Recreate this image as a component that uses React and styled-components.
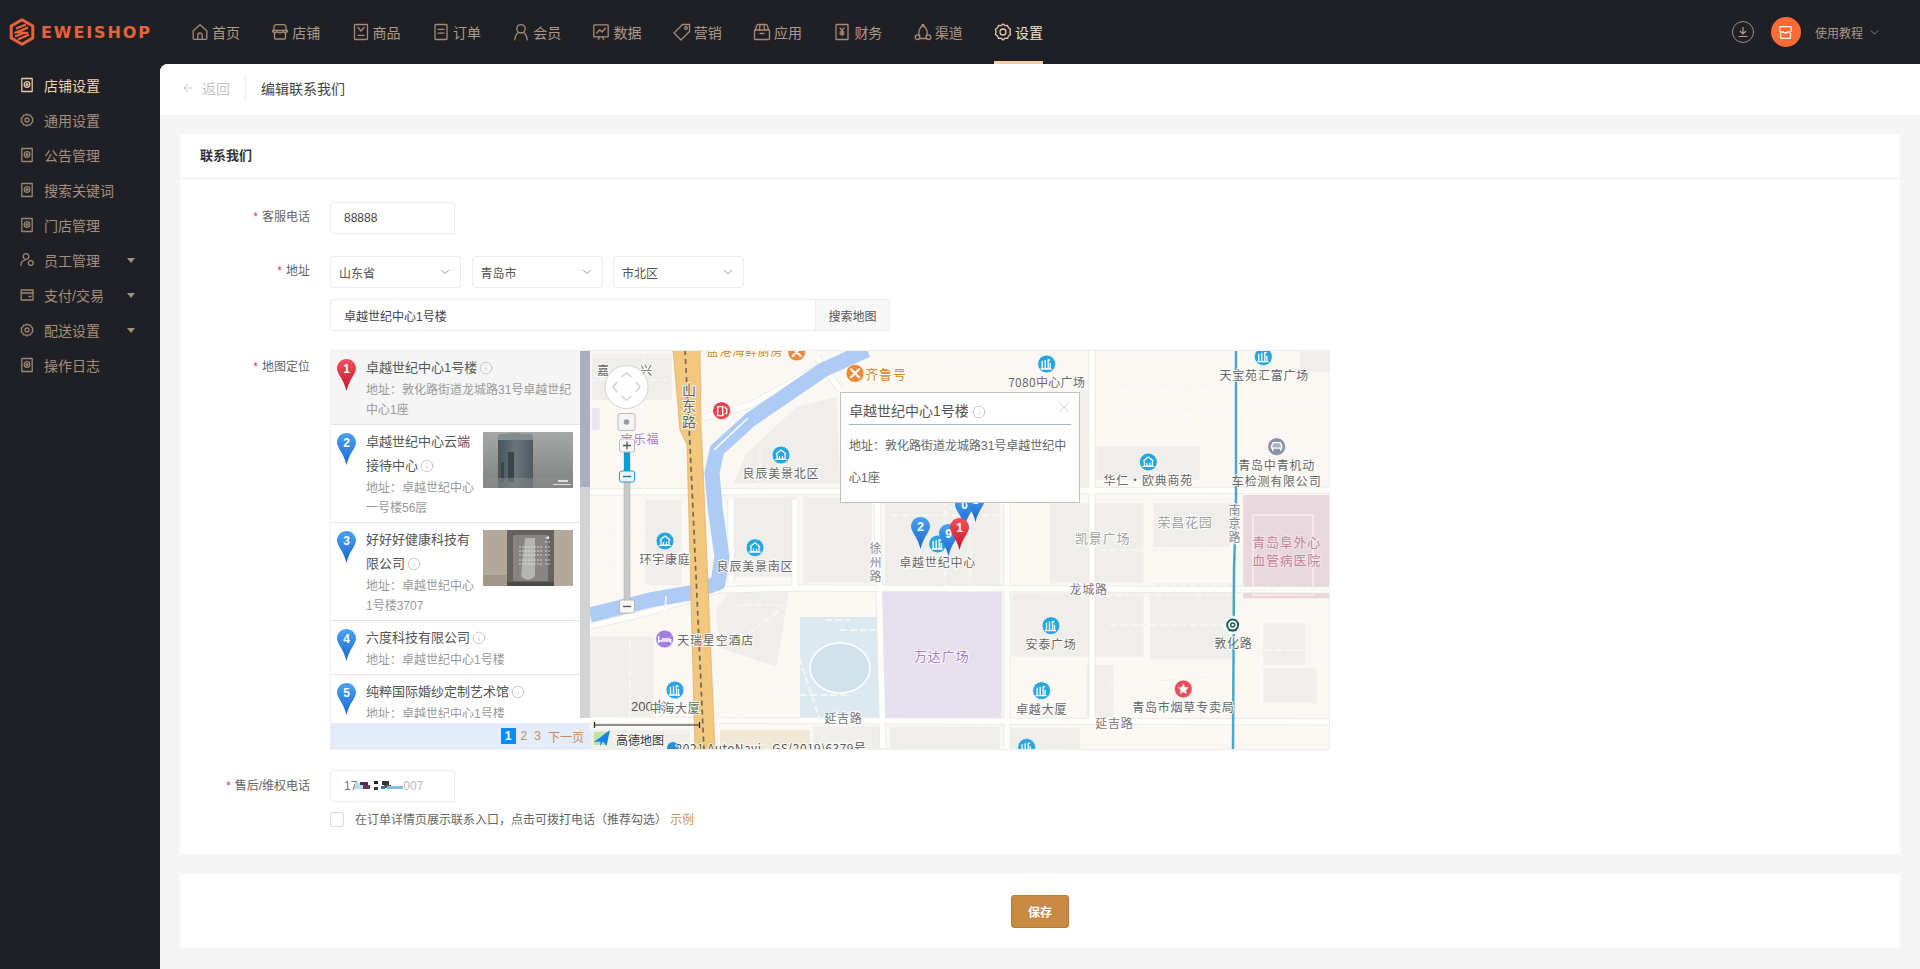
import React from "react";
import styled, { createGlobalStyle } from "styled-components";
import { ChevronDown, ArrowLeft, Info, X } from "lucide-react";

const ADDR = "\u5730\u5740\uFF1A";
const CHECK_TEXT = "在订单详情页展示联系入口\uFF0C点击可拨打电话\uFF08推荐勾选\uFF09";

const Global = createGlobalStyle`
  html, body { margin: 0; padding: 0; height: 100%; background: #f5f5f5; }
  body { font-family: "Liberation Sans", "Noto Sans CJK SC", sans-serif; font-size: 12px; color: #333; }
  * { box-sizing: border-box; }
`;

const Page = styled.div`width: 1920px; height: 969px; overflow: hidden; display: flex; flex-direction: column; background: #1f2026;`;
const Header = styled.header`height: 64px; flex: none; display: flex; align-items: center; background: #1f2026;`;
const Logo = styled.div`width: 191px; padding-left: 9px; display: flex; align-items: center; gap: 6px; flex: none;`;
const LogoText = styled.span`font-family: "DejaVu Sans", sans-serif; font-weight: 700; font-size: 16px; letter-spacing: 1.9px; color: #e9633a;`;
const Nav = styled.nav`display: flex; gap: 31.3px; height: 64px;`;
const NavItem = styled.a`
  position: relative; display: flex; align-items: center; gap: 3px; height: 64px; font-size: 14px;
  color: ${(p) => (p.$active ? "#f5e0c9" : "#b19a83")};
  svg { color: ${(p) => (p.$active ? "#e8c9a7" : "#a88c72")}; }
  ${(p) => p.$active && `&::after { content: ""; position: absolute; left: 0; right: 0; bottom: 0; height: 3px; background: #f4cfa8; }`}
`;
const HeaderRight = styled.div`margin-left: auto; display: flex; align-items: center; padding-right: 39px; color: #ab9684;`;
const Download = styled.span`width: 22px; height: 22px; border-radius: 50%; border: 1px solid #a58c74; display: flex; align-items: center; justify-content: center; margin-right: 17px;`;
const Avatar = styled.span`width: 30px; height: 30px; border-radius: 50%; background: #ff6a35; display: flex; align-items: center; justify-content: center; margin-right: 14px;`;
const Tutorial = styled.span`font-size: 12px; margin-right: 5px;`;

const Body = styled.div`flex: 1; display: flex; min-height: 0;`;
const Sidebar = styled.aside`width: 160px; flex: none; padding-top: 3px; background: #1f2026;`;
const SideItem = styled.a`
  height: 35px; display: flex; align-items: center; padding-left: 20px; gap: 10px; font-size: 14px; position: relative;
  color: ${(p) => (p.$active ? "#f2d3ae" : "#a58f7b")};
  svg { flex: none; }
`;
const Caret = styled.i`position: absolute; left: 127px; top: 16px; width: 0; height: 0; border: 4px solid transparent; border-top: 5px solid #a39180; border-bottom: 0;`;

const Main = styled.main`flex: 1; background: #f5f5f5; border-top-left-radius: 8px; overflow: hidden; display: flex; flex-direction: column;`;
const TopBar = styled.div`height: 51px; flex: none; background: #fff; display: flex; align-items: center; padding: 0 0 4px 21px; font-size: 14px;`;
const Back = styled.span`display: flex; align-items: center; gap: 7px; color: #c4c4c4; width: 65px; height: 24px; border-right: 1px solid #eee;`;
const PageTitle = styled.span`margin-left: 15px; color: #444;`;
const Content = styled.div`padding: 19px 20px 0; display: flex; flex-direction: column; gap: 20px;`;
const Card = styled.section`background: #fff; border-radius: 4px;`;
const CardHead = styled.div`height: 45px; padding: 0 0 4px 20px; display: flex; align-items: center; border-bottom: 1px solid #f0f0f0; font-size: 13px; font-weight: 700; color: #333;`;
const Form = styled.div`padding: 23px 0 27px; display: flex; flex-direction: column;`;
const Row = styled.div`display: flex; margin-bottom: ${(p) => p.$mb ?? 22}px;`;
const Label = styled.label`width: 130px; flex: none; text-align: right; line-height: ${(p) => p.$lh ?? 31}px; color: #666; margin-right: 20px; i { color: #d8405c; font-style: normal; margin-right: 4px; }`;
const Controls = styled.div`display: flex; flex-direction: column;`;
const Field = styled.div`
  width: ${(p) => p.$w ?? 125}px; height: 32px; border: 1px solid #eee; border-radius: 3px; padding: 0 13px; display: flex; align-items: center; color: #444; background: #fff;
`;
const SelectRow = styled.div`display: flex; gap: 10.5px; margin-bottom: 11px;`;
const Select = styled.div`width: 131px; height: 32px; border: 1px solid #eee; border-radius: 3px; padding: 0 8px; display: flex; align-items: center; justify-content: space-between; color: #555; svg { color: #777; }`;
const AddressGroup = styled.div`display: flex; width: 560px; height: 32px;`;
const SearchBtn = styled.div`width: 74px; flex: none; background: #f7f7f7; border: 1px solid #eee; border-left: 0; border-radius: 0 3px 3px 0; display: flex; align-items: center; justify-content: center; color: #555;`;
const AddressField = styled(Field)`flex: 1; width: auto; border-radius: 3px 0 0 3px;`;
const Mosaic = styled.svg`width: 52px; height: 12px; margin: 0 -4px 0 -2px;`;
const Digits = styled.span`color: #777; &:last-child { color: #bbb; }`;
const CheckRow = styled.div`display: flex; align-items: center; margin-top: 10px; height: 15px; color: #666;`;
const CheckText = styled.span`margin-top: -3px; display: inline-flex;`;
const Check = styled.span`width: 14px; height: 15px; border: 1px solid #ddd; border-radius: 2px; margin-right: 11px;`;
const Example = styled.a`color: #c59561; margin-left: 3px;`;

const MapBox = styled.div`position: relative; width: 1000px; height: 400px; border: 1px solid #eee; display: flex;`;
const ListCol = styled.div`width: 259px; flex: none; display: flex; flex-direction: column; background: #fff;`;
const ListTop = styled.div`flex: 1; min-height: 0; display: flex; margin-bottom: 5px;`;
const List = styled.div`width: 249px; overflow: hidden;`;
const Scrollbar = styled.div`width: 10px; background: #d3d3d3; div { height: 136px; background: #aaaec0; }`;
const Item = styled.div`
  display: flex; padding: 5px 7px 4px 6px; gap: 10px; border-bottom: 1px solid #e6e6e6;
  background: ${(p) => (p.$active ? "#f5f5f5" : "#fff")};
`;
const PinCell = styled.div`flex: none; width: 19px; padding-top: 3px;`;
const ItemText = styled.div`flex: 1; min-width: 0;`;
const ItemTitle = styled.div`font-size: 13px; line-height: 24px; color: #555; svg { vertical-align: -3px; margin-left: 2px; color: #b4b4b4; }`;
const ItemAddr = styled.div`font-size: 12px; line-height: 20px; color: #999;`;
const Thumb = styled.svg`width: 90px; height: 56px; flex: none; margin-top: 2px; margin-left: -2px;`;
const Pager = styled.div`height: 26px; flex: none; background: #e3ecf8; display: flex; align-items: center; justify-content: flex-end; gap: 7px; padding-right: 6px; color: #c28c5f; font-size: 12px;`;
const PageNum = styled.span`${(p) => p.$on && `width: 15px; height: 16px; margin-right: -2px; background: #0a8cf0; color: #fff; font-weight: 700; display: flex; align-items: center; justify-content: center;`}`;
const Canvas = styled.div`position: relative; width: 739px; height: 398px; overflow: hidden; background: #fbf8f3;`;
const MapSvg = styled.svg`display: block; width: 739px; height: 398px;`;
const MapLabel = styled.text`
  font-family: "Noto Sans CJK SC", sans-serif; font-size: ${(p) => p.$s ?? 12}px; letter-spacing: ${(p) => p.$ls ?? 0.8}px; text-anchor: middle;
  fill: ${(p) => p.$c ?? "#666"}; paint-order: stroke; stroke: ${(p) => p.$halo ?? "rgba(255,255,255,.85)"}; stroke-width: 2px; dominant-baseline: central;
`;
const Popup = styled.div`position: absolute; left: 250px; top: 41px; width: 240px; height: 111px; background: #fff; border: 1px solid #c1c1c1; padding: 0 8px;`;
const PopTitle = styled.div`height: 32px; padding-top: 5px; line-height: 26px; font-size: 14px; color: #555; border-bottom: 1px solid #a9b5cc; svg { vertical-align: -3px; margin-left: 3px; color: #b4b4b4; }`;
const PopClose = styled.span`position: absolute; right: 6px; top: 5px; color: #c4c4c4; display: flex;`;
const PopBody = styled.div`font-size: 12px; line-height: 32px; color: #666; padding-top: 5px; width: 222px; word-break: break-all;`;

const Footer = styled(Card)`height: 74px; display: flex; align-items: center; justify-content: center;`;
const Save = styled.button`width: 58px; height: 33px; background: #c88a42; border: 1px solid #b87b35; border-radius: 3px; color: #fff; font: 700 12px "Liberation Sans", "Noto Sans CJK SC", sans-serif;`;

/* ---------- icons ---------- */
const Ico = ({ children, s = 18, sw = 1.3 }) => (
  <svg width={s} height={s} viewBox="0 0 18 18" fill="none" stroke="currentColor" strokeWidth={sw} strokeLinecap="round" strokeLinejoin="round">{children}</svg>
);
const navIcons = {
  home: <><path d="M2.200 7.800 9 1.800l6.800 6v7.500a1 1 0 0 1-1 1H3.200a1 1 0 0 1-1-1z"/><path d="M6.800 16.300v-4.100a2.200 2.200 0 0 1 4.400 0v4.100"/></>,
  store: <><path d="M3 8V4a2.400 2.400 0 0 1 2.400-2.400h7.200A2.400 2.400 0 0 1 15 4v4"/><path d="M1.500 7.500c0 2.500 3.500 3 4.500 1 .8 1.800 5.200 1.800 6 0 1 2 4.500 1.500 4.500-1z"/><path d="M3.500 10v5a1 1 0 0 0 1 1h9a1 1 0 0 0 1-1v-5"/></>,
  goods: <><rect x="2.500" y="1.500" width="13" height="15" rx=".8"/><path d="M6 4.500 9 8l3-3.500"/><path d="M6 12.300h6"/></>,
  order: <><rect x="3" y="1.500" width="12" height="15" rx=".8"/><path d="M6 6.300h6M6 10.200h6"/></>,
  user: <><circle cx="9" cy="5.800" r="4.200"/><path d="M2.800 16.800c.2-3.700 1.800-6 3.700-7.400M15.200 16.800c-.2-3.700-1.800-6-3.700-7.400"/></>,
  data: <><rect x="1.800" y="1.800" width="14.400" height="12" rx=".6"/><path d="m4.700 10 3-3.200 2.500 2.200 3.200-3.700"/><path d="M6.500 16.500l.8-2.700M11.500 16.500l-.8-2.700"/></>,
  tag: <><path d="M9.500 1.500h7v7L8 17 1 10z"/><circle cx="13" cy="5" r="1.300"/></>,
  app: <><path d="M2.500 7 3.500 3a2 2 0 0 1 2-1.500h7A2 2 0 0 1 14.500 3l1 4"/><rect x="1.500" y="7" width="15" height="9.500" rx=".8"/><path d="M7 1.500 6.500 7M11 1.500l.5 5.500M7 10.500h4"/></>,
  finance: <><rect x="3" y="1.500" width="12" height="15" rx=".6"/><path d="m7 5 2 2.500L11 5M9 7.500v5M7 9h4M7 11h4"/></>,
  channel: <><path d="M5.800 13c-2-2.500-1-8.500 3.200-10.300 4.200 1.800 5.200 7.800 3.200 10.300"/><circle cx="9" cy="2.300" r="1"/><circle cx="3.500" cy="14.200" r="2.300"/><circle cx="14.500" cy="14.200" r="2.300"/><path d="M5.800 15.500h6.400"/></>,
  gear: <><path d="M9 1 11 2.600l2.500-.2 1 2.400 2 1.500-.6 2.700.6 2.500-2 1.500-1 2.400-2.500-.2L9 17l-2-1.800-2.500.2-1-2.400-2-1.500.6-2.500-.6-2.700 2-1.500 1-2.400L7 2.600z"/><circle cx="9" cy="9" r="3"/></>,
};
const Nv = ({ n }) => <Ico>{navIcons[n]}</Ico>;
const SideIcon = ({ kind, color }) => (
  <svg width="14" height="16" viewBox="0 0 14 16" fill="none" stroke={color} strokeWidth="1.300" strokeLinecap="round" strokeLinejoin="round">
    {kind === "doc" && <><rect x="1.800" y="1.500" width="10.400" height="13" /><circle cx="7" cy="7.500" r="2.800"/><circle cx="7" cy="7.500" r=".9"/></>}
    {kind === "gear" && <><path d="M7 2 8.500 3.200l2 0 .8 1.800 1.500 1.300L12.300 8l.5 1.700-1.500 1.300-.8 1.800-2 0L7 14l-1.500-1.200-2 0L2.700 11 1.200 9.700 1.700 8l-.5-1.700L2.700 5l.8-1.800 2 0z"/><circle cx="7" cy="8" r="2"/></>}
    {kind === "staff" && <><circle cx="6" cy="4.500" r="2.800"/><path d="M1 13.500c0-3 2-5 4-5.300"/><circle cx="10.800" cy="11" r="2.400"/></>}
    {kind === "pay" && <><rect x="1.200" y="3" width="11.800" height="10" /><path d="M1.200 6h11.800M9 9.500h2"/></>}
  </svg>
);
const Pin = ({ n, red, x, y, id }) => {
  const gid = `${id}g`;
  return (
    <svg x={x} y={y} width="19" height="32" viewBox="0 0 19 32">
      <defs>
        <linearGradient id={gid} x1="0" y1="0" x2="0" y2="1">
          <stop offset="0" stopColor={red ? "#f4505c" : "#4aa2f4"} />
          <stop offset="1" stopColor={red ? "#c5152a" : "#1b68cf"} />
        </linearGradient>
      </defs>
      <path d="M9.500 0C4.200 0 0 4.200 0 9.500 0 15 6.500 19.500 9.500 32 12.500 19.500 19 15 19 9.500 19 4.200 14.800 0 9.500 0Z" fill={`url(#${gid})`} />
      <text x="9.500" y="14" textAnchor="middle" fontSize="12" fontWeight="700" fill="#fff" fontFamily="Liberation Sans, sans-serif">{n}</text>
    </svg>
  );
};
const Poi = ({ x, y, kind = "tower", c = "#29a6df" }) => (
  <g transform={`translate(${x} ${y})`}>
    <circle r="9" fill={c} stroke="#fff" strokeOpacity=".7" />
    {kind === "tower" && <path d="M-4.500 5v-8M-1.500 5v-9M1.500 5v-9h2M-6 5h11M3.500 -1v6" stroke="#fff" strokeWidth="1.300" fill="none"/>}
    {kind === "home" && <path d="M-5 -1 0 -5 5 -1M-4 -1v5h8v-5M-1.500 4v-3M1.500 4v-3M-6 4.500h12" stroke="#fff" strokeWidth="1.200" fill="none"/>}
    {kind === "food" && <path d="M-4 -4 4 4M4 -4 -4 4" stroke="#fff" strokeWidth="2.200" strokeLinecap="round"/>}
    {kind === "hotel" && <path d="M-6 -3v7M6 0v4M-6 2h12M-3 0h8.500" stroke="#fff" strokeWidth="1.500" fill="none"/>}
    {kind === "gas" && <path d="M-4 5v-9h5v9M-5 5h7M3 -4l2 2v5h-2" stroke="#fff" strokeWidth="1.400" fill="none"/>}
    {kind === "star" && <path d="M0 -5.500 1.600 -1.800 5.500 -1.500 2.600 1.100 3.400 5 0 3 -3.400 5 -2.600 1.100 -5.500 -1.500 -1.600 -1.800Z" fill="#fff"/>}
    {kind === "car" && <path d="M-5 1.500h10V-1L3.500 -4h-7L-5 -1ZM-4 1.500v2.500M4 1.500v2.500" stroke="#fff" strokeWidth="1.400" fill="#fff" fillOpacity=".3"/>}
    {kind === "metro" && <><circle r="5.500" fill="none" stroke="#1f5f58" strokeWidth="2"/><circle r="2" fill="none" stroke="#1f5f58" strokeWidth="1.500"/><path d="M-4 5.500h8" stroke="#1f5f58" strokeWidth="1.500"/></>}
  </g>
);

/* ---------- map data (coordinates read off 3× crops) ---------- */
const L = (x, y) => [x / 3, y / 3 - 10];
const R = (x, y) => [x / 3 + 310, y / 3 - 10];
const rect5 = [
  [5, 40, 240, 140], [165, 480, 110, 255], [430, 470, 190, 240], [640, 470, 205, 260], [885, 490, 345, 250],
  [0, 890, 190, 240], [0, 1170, 300, 60], [670, 1160, 210, 70], [900, 1160, 330, 70],
];
const rect6 = [
  [335, 760, 240, 190], [585, 760, 145, 190], [750, 730, 250, 225], [590, 320, 310, 100], [760, 490, 230, 130],
  [450, 490, 280, 240], [560, 975, 80, 155], [1090, 850, 125, 125], [1090, 985, 160, 105], [1200, 35, 90, 60],
  [330, 1165, 210, 65], [540, 150, 30, 290],
];
const toPts = (f, s) => s.map(([x, y]) => f(x, y).join(",")).join(" ");
const roads = [
  "0,142 739,140", "205,238 739,240", "0,370 739,372", "287,150 293,398", "417,120 417,398", "502,0 502,372",
  "0,276 60,262 128,240 205,238", "227,7 250,40", "113,68 160,55 233,15", "141,150 141,232", "205,150 205,238",
];
const dashes = [
  "0,30 80,30", "55,0 55,150", "20,150 20,265", "40,280 40,400", "140,12 240,12", "170,100 170,140", "250,5 250,30",
  "0,180 52,180", "0,215 52,215", "145,255 200,255", "150,290 190,260", "128,280 128,398", "200,280 230,370", "235,270 260,270",
  "250,280 285,280", "180,345 260,345", "300,0 400,0", "350,15 450,15", "302,165 415,165", "355,150 355,238", "380,150 380,238",
  "420,40 495,30", "520,5 640,5", "530,35 640,35", "530,60 640,60", "600,35 600,80", "650,55 739,55", "650,100 739,100",
  "505,150 640,150", "510,200 640,200", "515,245 640,245", "520,275 640,275", "650,240 739,240", "425,325 495,325",
  "430,355 495,355", "520,335 640,325", "520,362 640,362", "560,235 640,235", "655,260 739,260", "655,300 739,300",
];
const labels = [
  [L, 40, 88, "嘉"], [L, 170, 88, "兴"],
  [L, 465, 30, "盐港海鲜厨房", { c: "#d48820" }], [L, 888, 100, "齐鲁号", { c: "#d48820", s: 13 }],
  [L, 298, 148, "山", { s: 14 }], [L, 298, 194, "东", { s: 14 }], [L, 298, 242, "路", { s: 14 }],
  [L, 150, 296, "宝乐福", { c: "#a878c8" }], [L, 573, 398, "良辰美景北区"], [L, 225, 655, "环宇康庭"], [L, 495, 677, "良辰美景南区"],
  [L, 858, 622, "徐", { c: "#888" }], [L, 858, 665, "州", { c: "#888" }], [L, 858, 706, "路", { c: "#888" }],
  [L, 1043, 665, "卓越世纪中心"], [L, 1055, 945, "万达广场", { c: "#a67cc4", s: 13 }], [L, 377, 897, "天瑞星空酒店"],
  [L, 255, 1102, "中海大厦"], [L, 760, 1132, "延吉路", { c: "#777" }],
  [R, 440, 124, "7080中心广场", { ls: 0.3 }], [R, 1093, 103, "天宝苑汇富广场"], [R, 1130, 373, "青岛中青机动"], [R, 1130, 420, "车检测有限公司"],
  [R, 745, 418, "华仁・欧典商苑"], [R, 1005, 507, "南", { c: "#888" }], [R, 1005, 548, "京", { c: "#888" }], [R, 1005, 590, "路", { c: "#888" }],
  [R, 855, 543, "荣昌花园", { c: "#a0a0a0", s: 13 }], [R, 608, 591, "凯景广场", { c: "#a0a0a0", s: 13 }],
  [R, 1160, 605, "青岛阜外心", { c: "#c57f98", s: 13, halo: "rgba(255,255,255,.4)" }], [R, 1160, 658, "血管病医院", { c: "#c57f98", s: 13, halo: "rgba(255,255,255,.4)" }],
  [R, 566, 745, "龙城路", { c: "#777" }], [R, 453, 910, "安泰广场"], [R, 1000, 907, "敦化路"], [R, 425, 1105, "卓越大厦"],
  [R, 850, 1098, "青岛市烟草专卖局"], [R, 643, 1147, "延吉路", { c: "#777" }],
];
const pois = [
  [L, 620, 36, "food", "#ef8a3a"], [L, 795, 100, "food", "#ef8a3a"], [L, 395, 212, "gas", "#e0474f"], [L, 573, 345, "home"], [L, 225, 603, "home"],
  [L, 495, 623, "home"], [L, 1043, 612, "tower"], [L, 224, 897, "hotel", "#a07fe0"], [L, 255, 1050, "tower"],
  [R, 440, 72, "tower"], [R, 1090, 50, "tower"], [R, 1130, 320, "car", "#8b93a5"], [R, 745, 366, "home"], [R, 453, 857, "tower"],
  [R, 998, 855, "metro", "#f4f7f5"], [R, 425, 1052, "tower"], [R, 850, 1047, "star", "#e8505a"], [R, 380, 1222, "tower"],
];
const BLOCK = "#efeeea";

const CityMap = () => (
  <MapSvg viewBox="0 1 739 398">
    <rect x="0" y="0" width="739" height="400" fill="#fbf8f3" />
    {rect5.map(([x, y, w, h], i) => { const [a, b] = L(x, y); return <rect key={i} x={a} y={b} width={w / 3} height={h / 3} fill={BLOCK} />; })}
    {rect6.map(([x, y, w, h], i) => { const [a, b] = R(x, y); return <rect key={i} x={a} y={b} width={w / 3} height={h / 3} fill={BLOCK} />; })}
    <polygon points={toPts(L, [[470, 340], [620, 200], [740, 170], [750, 430], [430, 430]])} fill={BLOCK} />
    <polygon points={toPts(L, [[440, 735], [600, 735], [560, 980], [380, 920], [380, 800]])} fill={BLOCK} />
    <rect x="1.700" y="58" width="8" height="22" rx="2" fill="#e9e6f0" />
    <rect x={875 / 3} y={755 / 3 - 10} width={360 / 3} height={380 / 3} fill="#e6dfee" />
    <rect x={390 / 3} y={1170 / 3 - 10} width={270 / 3} height={60 / 3} fill="#f3e8d6" />
    <rect x="210" y="267" width="80" height="100" fill="#dce9f0" />
    <ellipse cx="250" cy="318" rx="30" ry="25" fill="#cfe2ec" stroke="#fff" strokeWidth="1.500" />
    <rect x={1030 / 3 + 310} y={465 / 3 - 10} width={258 / 3} height={310 / 3} fill="#e8d7dd" />
    <path d="M663 165h60v80h-60z" fill="none" stroke="#f7eef0" strokeWidth="1.500" />
    {roads.map((p, i) => <polyline key={`o${i}`} points={p} fill="none" stroke="#e8e6df" strokeWidth="7" />)}
    {roads.map((p, i) => <polyline key={`r${i}`} points={p} fill="none" stroke="#fdfdfb" strokeWidth="5.500" />)}
    {dashes.map((p, i) => <polyline key={`d${i}`} points={p} fill="none" stroke="#fff" strokeWidth="2" strokeDasharray="7 3" />)}
    {dashes.map((p, i) => <polyline key={`e${i}`} points={p} fill="none" stroke="#e2dfd6" strokeWidth=".6" strokeDasharray="7 3" />)}
    <polyline points="277,0 233,20 160,70 127,100 122,123 125,157 132,207 128,233 100,243 60,250 0,265" fill="none" stroke="#aecbf5" strokeWidth="15" strokeLinejoin="round" />
    <path d="M76 246l-1 16M124 100l34-32" stroke="#fff" strokeWidth="1.500" />
    <polygon points="83,0 110,0 111,77 112,95 125,400 105,400 97,95 90,80" fill="#f3c77e" stroke="#e2b26b" strokeWidth=".8" />
    <polyline points="95,0 100,95 114,400" fill="none" stroke="#6e6a5e" strokeWidth="1.700" strokeDasharray="5 4" />
    <polyline points="646,0 646,150 644,220 643,400" fill="none" stroke="#4aa7c9" strokeWidth="2.500" />
    <text x="41" y="361" fontSize="13" fill="#555" fontFamily="Liberation Sans, Noto Sans CJK SC, sans-serif">200米</text>
    {pois.map(([f, x, y, k, c], i) => { const [a, b] = f(x, y); return <Poi key={i} x={a} y={b} kind={k} c={c} />; })}
    {labels.map(([f, x, y, t, o = {}], i) => { const [a, b] = f(x, y); return <MapLabel key={i} x={a} y={b} $c={o.c} $s={o.s} $ls={o.ls} $halo={o.halo}>{t}</MapLabel>; })}
    <Pin x={365} y={145} n="0" id="m10" />
    <Pin x={376} y={140} n="8" id="m8" />
    <Pin x={321} y={167} n="2" id="m2" />
    <Pin x={349} y={174} n="9" id="m9" />
    <Pin x={360} y={168} n="1" red id="m1" />
    {/* navigation control */}
    <circle cx="36.500" cy="37" r="21.500" fill="#fff" fillOpacity=".93" stroke="#d5d5d5" />
    <path d="M31.500 27l5-4 5 4M31.500 46l5 4 5-4M27 32l-4 5 4 5M46 32l4 5-4 5" fill="none" stroke="#d2d2d2" strokeWidth="1.500" />
    <rect x="28" y="63.500" width="17" height="17" rx="2" fill="#f4f4f4" stroke="#bbb" />
    <circle cx="36.500" cy="72" r="2.800" fill="#999" />
    <rect x="34" y="100" width="6" height="160" fill="#c9c9c9" stroke="#aaa" strokeWidth=".5" />
    <rect x="34" y="100" width="6" height="22" fill="#0d9bd8" />
    <rect x="29.500" y="89" width="15" height="13" rx="2" fill="#f7f7f7" stroke="#bbb" />
    <path d="M33 95.500h8M37 91.500v8" stroke="#555" strokeWidth="1.300" />
    <rect x="29.500" y="121" width="15" height="11" rx="2" fill="#eaf5fb" stroke="#2a9bd0" />
    <path d="M33 126.500h8" stroke="#1b6f9b" strokeWidth="1.300" />
    <rect x="29.500" y="250" width="15" height="13" rx="2" fill="#f7f7f7" stroke="#bbb" />
    <path d="M33 256.500h8" stroke="#555" strokeWidth="1.300" />
    {/* scale + attribution */}
    <path d="M4.500 372v6M4.500 375h105M109.500 372v6" stroke="#222" strokeWidth="1.200" fill="none" />
    <rect x="4" y="382" width="13" height="13" fill="#bfe3a8" />
    <path d="M4 392 20 380l-3.500 16-3.500-4.500L10 396l.5-4.500z" fill="#1583e6" />
    <MapLabel x="50" y="389" $c="#333" $ls={0} $s={12}>高德地图</MapLabel>
    <circle cx="83" cy="398" r="6" fill="#2a8fd0" />
    <MapLabel x="181" y="397" $c="#555" $ls={0.4} $s={12}>2021 AutoNavi - GS(2019)6379号</MapLabel>
  </MapSvg>
);

const navItems = [["home", "首页"], ["store", "店铺"], ["goods", "商品"], ["order", "订单"], ["user", "会员"], ["data", "数据"], ["tag", "营销"], ["app", "应用"], ["finance", "财务"], ["channel", "渠道"], ["gear", "设置"]];
const sideItems = [["doc", "店铺设置"], ["gear", "通用设置"], ["doc", "公告管理"], ["doc", "搜索关键词"], ["doc", "门店管理"], ["staff", "员工管理", 1], ["pay", "支付/交易", 1], ["gear", "配送设置", 1], ["doc", "操作日志"]];
const listData = [
  { n: "1", red: true, title: "卓越世纪中心1号楼", addr: "敦化路街道龙城路31号卓越世纪中心1座" },
  { n: "2", title: "卓越世纪中心云端接待中心", addr: "卓越世纪中心一号楼56层", thumb: "tower" },
  { n: "3", title: "好好好健康科技有限公司", addr: "卓越世纪中心1号楼3707", thumb: "lobby" },
  { n: "4", title: "六度科技有限公司", addr: "卓越世纪中心1号楼" },
  { n: "5", title: "纯粹国际婚纱定制艺术馆", addr: "卓越世纪中心1号楼" },
];

const Tower = () => (
  <Thumb viewBox="0 0 90 56">
    <defs>
      <linearGradient id="sky" x1="0" y1="0" x2="0" y2="1"><stop offset="0" stopColor="#a6a8a6"/><stop offset="1" stopColor="#7d817e"/></linearGradient>
      <linearGradient id="glass" x1="0" y1="0" x2="1" y2="0"><stop offset="0" stopColor="#47545a"/><stop offset=".5" stopColor="#6a767b"/><stop offset="1" stopColor="#4e5a60"/></linearGradient>
    </defs>
    <rect width="90" height="56" fill="url(#sky)" />
    <path d="M15 3q17-3 35 0v53H15z" fill="url(#glass)" />
    <path d="M15 3q17-3 35 0v5H15z" fill="#828d92" />
    <path d="M25 20h6v30h-6zM18 30h3v20h-3z" fill="#3b464b" />
    <rect x="0" y="46" width="90" height="10" fill="#8b8e8b" opacity=".5" />
    <path d="M75 48h10v2H75zM70 52h18v1H70z" fill="#dedede" />
  </Thumb>
);
const Lobby = () => (
  <Thumb viewBox="0 0 90 56">
    <rect width="90" height="56" fill="#b3a89b" />
    <rect x="24" y="0" width="47" height="56" fill="#67625c" />
    <rect x="30" y="5" width="35" height="46" fill="#878583" />
    <path d="M42 8h10v38c-4 5-10 5-14 0z" fill="#c8c7c5" opacity=".7" />
    <path d="M36 17h24M36 21h24M36 25h24M36 30h24M36 34h24M62 12h5M62 17h5M62 21h5M62 25h5M62 30h5M62 34h5" stroke="#e6e6e6" strokeWidth=".8" strokeDasharray="2 1" />
    <path d="M62 8l4-2v3z" fill="#eee" />
    <rect x="24" y="52" width="47" height="4" fill="#4f4a45" />
    <rect x="0" y="45" width="24" height="11" fill="#a1968a" />
  </Thumb>
);
const Inf = () => <Info size={14} strokeWidth={1.200} />;
const ListPin = ({ n, red }) => (
  <PinCell><svg width="19" height="32"><Pin x={0} y={0} n={n} red={red} id={`l${n}`} /></svg></PinCell>
);

export default function App() {
  return (
    <Page>
      <Global />
      <Header>
        <Logo>
          <svg width="26" height="28" viewBox="0 0 26 28" fill="none" stroke="#e9633a">
            <path d="M13 1.800 23.800 8v12L13 26.200 2.200 20V8z" strokeWidth="3" strokeLinejoin="round" />
            <path d="M7 10.500 17 6.500M5.500 15 19 9.500 8 14.500 19 15M9 21.500 20 16.500M6 18.500l10-4" strokeWidth="2.200" />
          </svg>
          <LogoText>EWEISHOP</LogoText>
        </Logo>
        <Nav>
          {navItems.map(([n, t]) => (
            <NavItem key={t} $active={t === "设置"}><Nv n={n} />{t}</NavItem>
          ))}
        </Nav>
        <HeaderRight>
          <Download>
            <svg width="12" height="12" viewBox="0 0 12 12" fill="none" stroke="#b39d88" strokeWidth="1.200"><path d="M6 1v6.500M3 5l3 3 3-3M1.500 10.500h9"/></svg>
          </Download>
          <Avatar>
            <svg width="15" height="15" viewBox="0 0 18 18" fill="none" stroke="#fff" strokeWidth="1.500" strokeLinejoin="round"><path d="M4 2h10a2 2 0 0 1 2 2v3a2.500 2.500 0 0 1-4 1 3.500 3.500 0 0 1-6 0 2.500 2.500 0 0 1-4-1V4a2 2 0 0 1 2-2z"/><path d="M3 10v5a1 1 0 0 0 1 1h10a1 1 0 0 0 1-1v-5"/></svg>
          </Avatar>
          <Tutorial>使用教程</Tutorial>
          <ChevronDown size={13} strokeWidth={1.5} />
        </HeaderRight>
      </Header>
      <Body>
        <Sidebar>
          {sideItems.map(([k, t, c], i) => (
            <SideItem key={t} $active={i === 0}>
              <SideIcon kind={k} color={i === 0 ? "#e9c8a2" : "#9c8672"} />
              {t}
              {c && <Caret />}
            </SideItem>
          ))}
        </Sidebar>
        <Main>
          <TopBar>
            <Back><ArrowLeft size={14} strokeWidth={1.500} />返回</Back>
            <PageTitle>编辑联系我们</PageTitle>
          </TopBar>
          <Content>
            <Card>
              <CardHead>联系我们</CardHead>
              <Form>
                <Row>
                  <Label><i>*</i>客服电话</Label>
                  <Field>88888</Field>
                </Row>
                <Row $mb={19}>
                  <Label><i>*</i>地址</Label>
                  <Controls>
                    <SelectRow>
                      <Select>山东省<ChevronDown size={14} strokeWidth={1.300} /></Select>
                      <Select>青岛市<ChevronDown size={14} strokeWidth={1.300} /></Select>
                      <Select>市北区<ChevronDown size={14} strokeWidth={1.300} /></Select>
                    </SelectRow>
                    <AddressGroup>
                      <AddressField>卓越世纪中心1号楼</AddressField>
                      <SearchBtn>搜索地图</SearchBtn>
                    </AddressGroup>
                  </Controls>
                </Row>
                <Row $mb={20}>
                  <Label $lh={34}><i>*</i>地图定位</Label>
                  <MapBox>
                    <ListCol>
                      <ListTop>
                        <List>
                          {listData.map((d) => (
                            <Item key={d.n} $active={d.n === "1"}>
                              <ListPin n={d.n} red={d.red} />
                              <ItemText>
                                <ItemTitle>{d.title}<Inf /></ItemTitle>
                                <ItemAddr>{ADDR}{d.addr}</ItemAddr>
                              </ItemText>
                              {d.thumb === "tower" && <Tower />}
                              {d.thumb === "lobby" && <Lobby />}
                            </Item>
                          ))}
                        </List>
                        <Scrollbar><div /></Scrollbar>
                      </ListTop>
                      <Pager>
                        <PageNum $on>1</PageNum><PageNum>2</PageNum><PageNum>3</PageNum><PageNum>下一页</PageNum>
                      </Pager>
                    </ListCol>
                    <Canvas>
                      <CityMap />
                      <Popup>
                        <PopTitle>卓越世纪中心1号楼<Inf /></PopTitle>
                        <PopClose><X size={18} strokeWidth={1} /></PopClose>
                        <PopBody>{ADDR}敦化路街道龙城路31号卓越世纪中心1座</PopBody>
                      </Popup>
                    </Canvas>
                  </MapBox>
                </Row>
                <Row $mb={0}>
                  <Label $lh={33}><i>*</i>售后/维权电话</Label>
                  <Controls>
                    <Field>
                      <Digits>17</Digits>
                      <Mosaic viewBox="0 0 52 12">
                        <rect x="0" y="3" width="8" height="6" fill="#bcd9ef" />
                        <rect x="5" y="2" width="8" height="3" fill="#4a2f52" /><rect x="8" y="5" width="7" height="4" fill="#6b3a56" />
                        <rect x="19" y="1" width="4" height="3" fill="#222" /><rect x="19" y="7" width="4" height="3" fill="#333" />
                        <rect x="27" y="1" width="7" height="4" fill="#3c3345" /><rect x="29" y="5" width="7" height="3" fill="#8a4030" />
                        <rect x="32" y="6" width="16" height="3" fill="#7fbde0" /><rect x="26" y="6" width="4" height="3" fill="#3a78b0" />
                      </Mosaic>
                      <Digits>007</Digits>
                    </Field>
                    <CheckRow>
                      <Check /><CheckText>{CHECK_TEXT}<Example>示例</Example></CheckText>
                    </CheckRow>
                  </Controls>
                </Row>
              </Form>
            </Card>
            <Footer>
              <Save>保存</Save>
            </Footer>
          </Content>
        </Main>
      </Body>
    </Page>
  );
}
